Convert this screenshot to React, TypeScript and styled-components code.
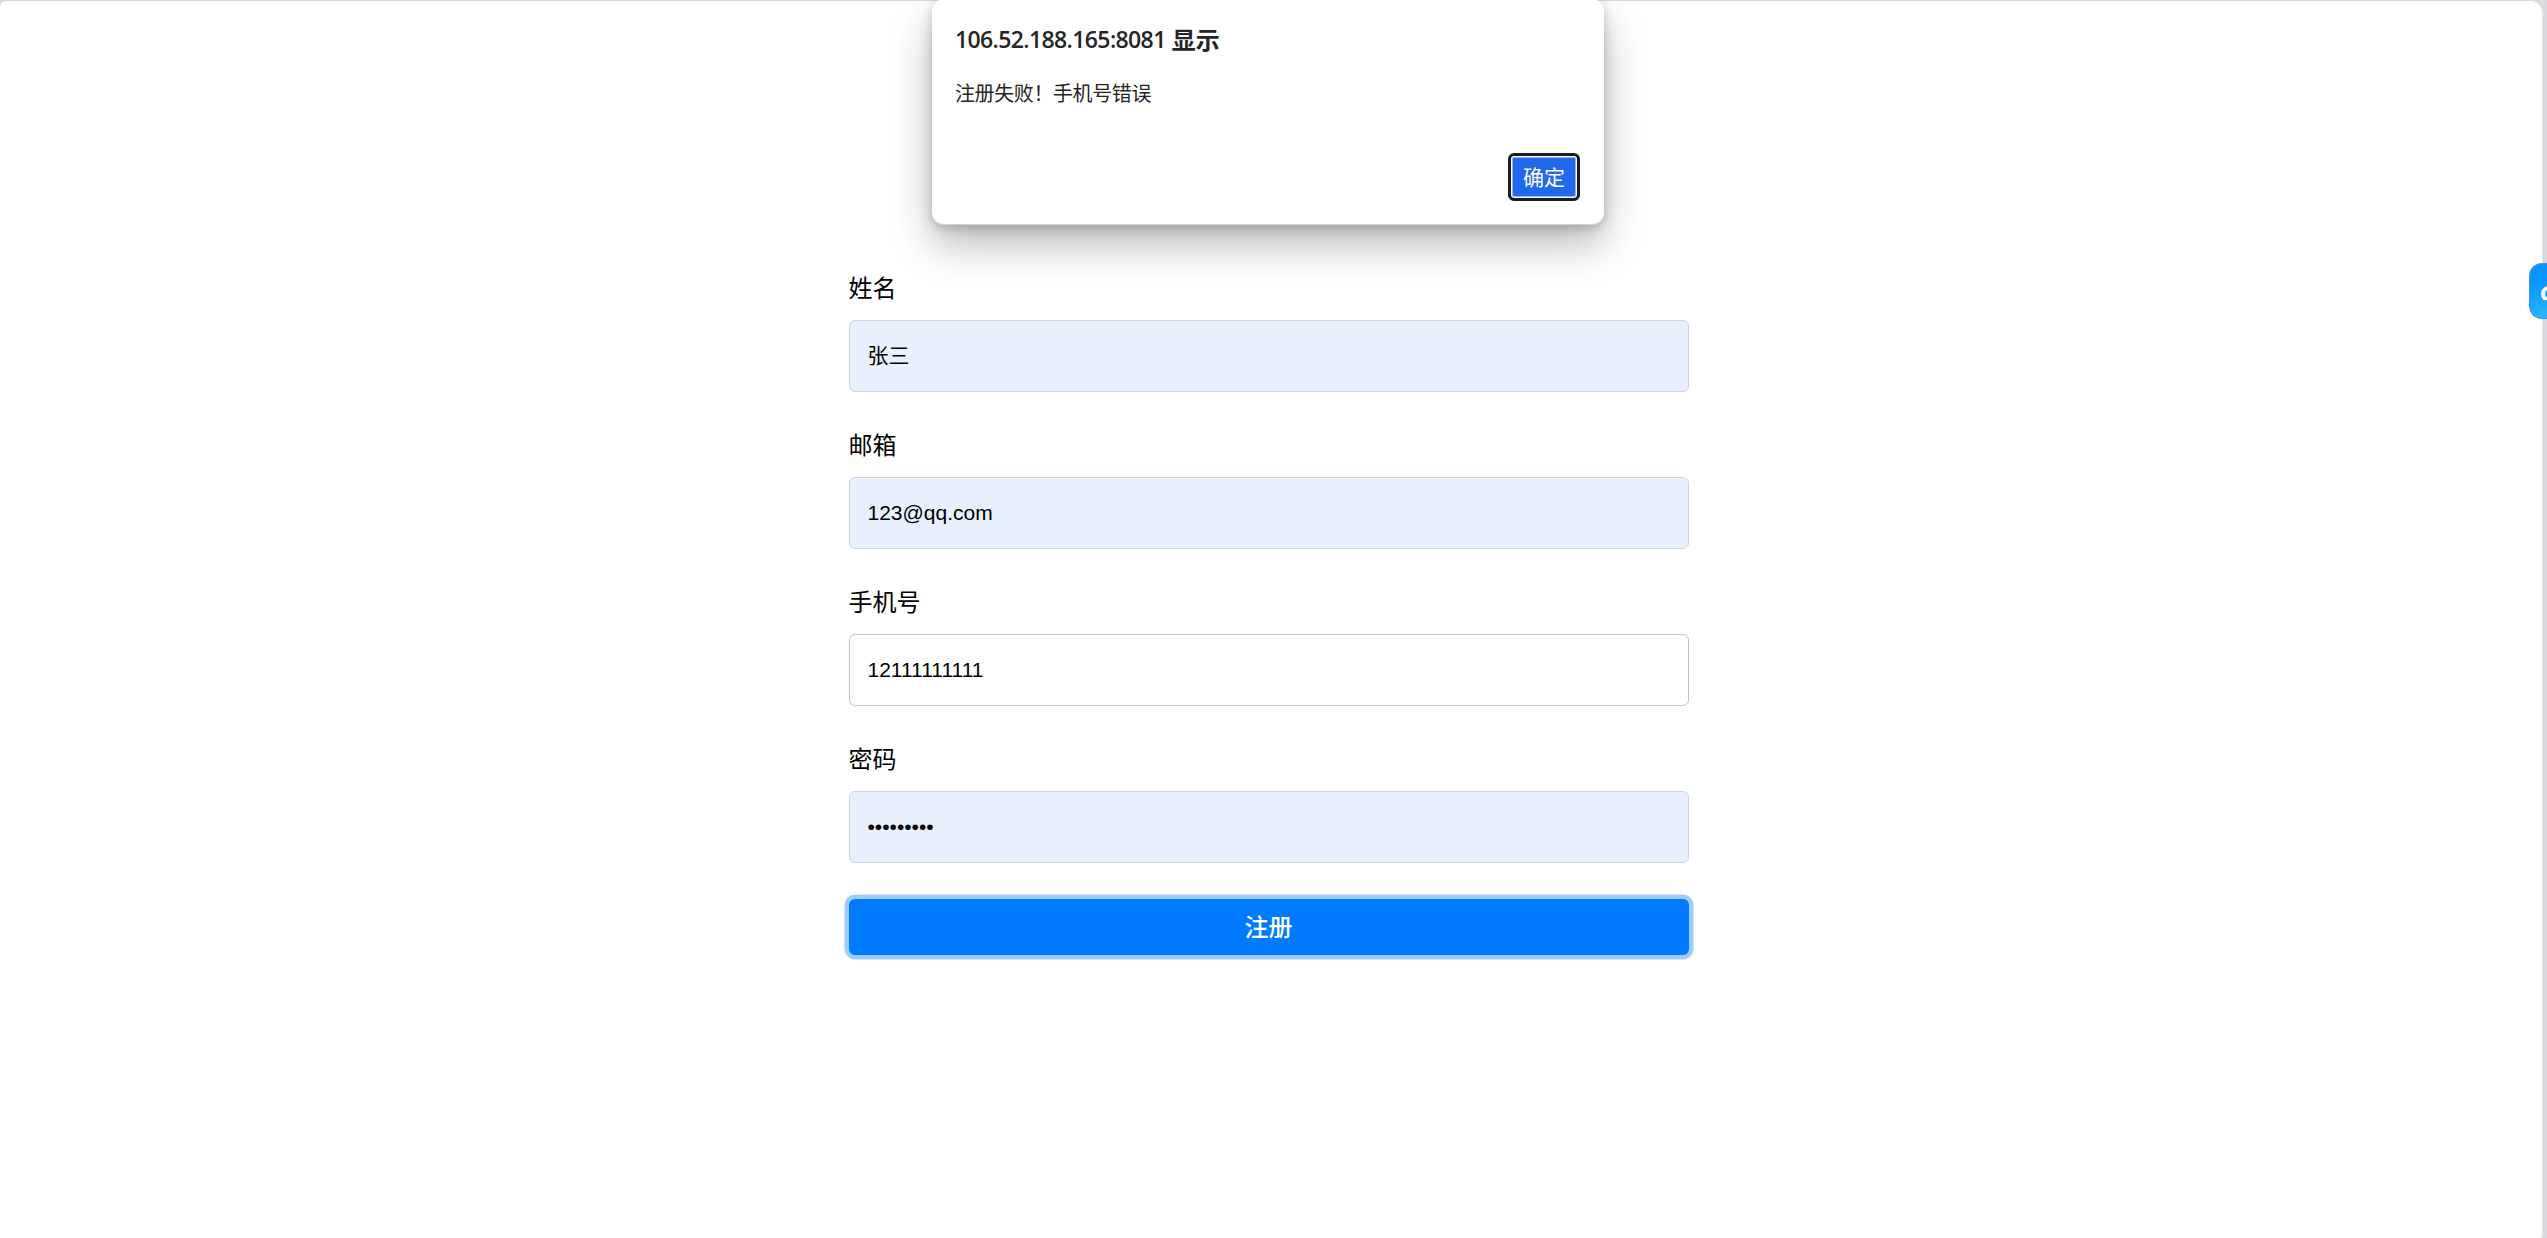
import styled, { createGlobalStyle } from "styled-components";

const GlobalStyle = createGlobalStyle`
  * {
    box-sizing: border-box;
  }

  body {
    margin: 0;
    background: #dadade;
    font-family: "Liberation Sans", "Noto Sans CJK SC", sans-serif;
    overflow: hidden;
  }
`;

const Window = styled.div`
  position: relative;
  width: 100vw;
  height: 100vh;
  padding: 1px 4px 0 0;
  background: #d9d9de;
  overflow: hidden;
`;

const Page = styled.main`
  display: flex;
  justify-content: center;
  height: 100%;
  padding: 269px 5px 0 0;
  background: #fff;
  border-right: 1px solid #e6e6ea;
  border-radius: 6px 12px 4px 0;
`;

const Form = styled.form`
  display: flex;
  flex-direction: column;
  width: 840px;
`;

const Field = styled.div`
  display: flex;
  flex-direction: column;
  height: 157px;
`;

const Label = styled.label`
  height: 50px;
  font-family: "Noto Sans CJK SC", sans-serif;
  font-size: 24px;
  font-weight: 400;
  line-height: 34px;
  color: #000;
`;

const Input = styled.input<{ $filled?: boolean; $cjk?: boolean }>`
  width: 100%;
  height: 72px;
  padding: 0 18px ${({ $cjk }) => ($cjk ? "4px" : "0")};
  border: 1px solid ${({ $filled }) => ($filled ? "#ced4da" : "#d3bfc7")};
  border-radius: 6px;
  outline: none;
  background: ${({ $filled }) => ($filled ? "#e8f0fe" : "#fff")};
  color: #000;
  font-family: inherit;
  font-size: 21px;
`;

const Submit = styled.button`
  height: 56px;
  margin-top: 1px;
  padding: 0 0 2px;
  border: none;
  border-radius: 6px;
  background: #007bff;
  box-shadow: 0 0 0 4.5px rgba(0, 123, 255, .38);
  color: #fff;
  font-family: "Noto Sans CJK SC", sans-serif;
  font-size: 24px;
  font-weight: 500;
  line-height: 54px;
`;

const Dialog = styled.div`
  position: absolute;
  top: -1px;
  left: 932px;
  display: flex;
  flex-direction: column;
  width: 672px;
  height: 226px;
  padding: 22px 24px 23px 23px;
  border-bottom: 1px solid #d4d4d4;
  border-radius: 12px;
  background: #fff;
  box-shadow: 0 3px 12px rgba(0, 0, 0, .2), 0 20px 40px rgba(0, 0, 0, .27);
`;

const DialogTitle = styled.h2`
  display: flex;
  align-items: center;
  gap: 6px;
  height: 36px;
  margin: 0;
  color: #252525;
  font-family: "Noto Sans CJK SC", sans-serif;
  font-size: 24px;
  font-weight: 700;
  line-height: 36px;
`;

const Host = styled.span`
  font-family: "Open Sans", sans-serif;
  font-size: 23px;
  font-weight: 600;
  letter-spacing: -.62px;
`;

const Message = styled.p`
  margin: 21px 0 0;
  color: #252525;
  font-family: "Noto Sans CJK SC", sans-serif;
  font-size: 20px;
  font-weight: 400;
  letter-spacing: -.4px;
  line-height: 30px;
`;

const Confirm = styled.button`
  align-self: flex-end;
  width: 72px;
  height: 48px;
  margin-top: auto;
  padding: 0 0 2px;
  border: 3px solid #1b1c24;
  border-radius: 6px;
  background: #2169eb;
  box-shadow: inset 0 0 0 1px #fff, inset 0 0 0 2px #8db2f5;
  color: #fff;
  font-family: "Noto Sans CJK SC", sans-serif;
  font-size: 21px;
  line-height: 40px;
`;

const Floating = styled.div`
  position: absolute;
  top: 263px;
  right: 0;
  display: flex;
  align-items: center;
  justify-content: flex-end;
  width: 18px;
  height: 56px;
  border: 1px solid #3d91f5;
  border-right: 0;
  border-radius: 13px 0 0 13px;
  background: linear-gradient(160deg, #0693ff 25%, #2ab6ff);
  overflow: hidden;
`;

const fields = [
  { id: "name", label: "姓名", type: "text", value: "张三", filled: true, cjk: true },
  { id: "email", label: "邮箱", type: "text", value: "123@qq.com", filled: true },
  { id: "phone", label: "手机号", type: "text", value: "12111111111", filled: false },
  { id: "password", label: "密码", type: "password", value: "123456789", filled: true },
];

function App() {
  return (
    <Window>
      <GlobalStyle />
      <Page>
        <Form>
          {fields.map((field) => (
            <Field key={field.id}>
              <Label htmlFor={field.id}>{field.label}</Label>
              <Input
                id={field.id}
                type={field.type}
                defaultValue={field.value}
                $filled={field.filled}
                $cjk={field.cjk}
              />
            </Field>
          ))}
          <Submit type="button">注册</Submit>
        </Form>
      </Page>

      <Dialog role="alertdialog">
        <DialogTitle>
          <Host>106.52.188.165:8081</Host>
          <span>显示</span>
        </DialogTitle>
        <Message>注册失败！手机号错误</Message>
        <Confirm type="button">确定</Confirm>
      </Dialog>

      <Floating>
        <svg width="6" height="18" viewBox="0 0 6 18" fill="none">
          <circle cx="8" cy="12" r="6" stroke="#fff" strokeWidth="4" />
        </svg>
      </Floating>
    </Window>
  );
}

export default App;
